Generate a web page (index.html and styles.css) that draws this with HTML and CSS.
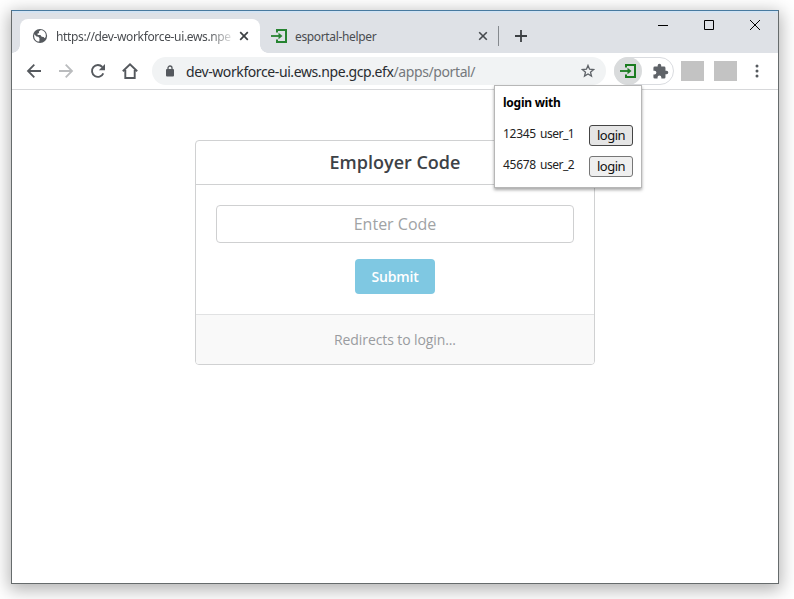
FILE: index.html
```html
<!DOCTYPE html>
<html lang="en">
<head>
<meta charset="utf-8">
<title>Employer Code</title>
<link rel="stylesheet" href="styles.css">
</head>
<body>
<div class="window">
  <div class="tabstrip">
    <div class="tab tab-active">
      <svg class="globe" viewBox="0 0 16 16"><circle cx="8" cy="8" r="7.1" fill="#55595e"/><path d="M2.2 6.2L4.5 8.5l1.800.2 1.200 1.500-.2 3.400C4 13.500 1.800 11 2.200 6.200zM8.800 2.100l-2 1.500.3 1.300-1.800.8.5 1.200 2.600.1 1.300 1.800 2 .1.8 1.400 1.200-1.300c.7-3.600-1.300-6.500-4.900-6.900z" fill="#fff"/></svg>
      <span class="tab-title tab-fade">https://dev-workforce-ui.ews.npe</span>
      <svg class="x" viewBox="0 0 10 10"><path d="M1.200 1.200l7.600 7.600M8.800 1.200L1.200 8.800" stroke="#3c4043" stroke-width="1.700"/></svg>
    </div>
    <div class="tab tab-second">
      <svg class="login-icon" viewBox="0 0 16 16"><path d="M6 4.500V2h9v12H6v-2.500" fill="none" stroke="#278432" stroke-width="2"/><path d="M0 8h9" stroke="#278432" stroke-width="1.800"/><path d="M7.500 4.700L11.500 8l-4 3.300z" fill="#278432"/></svg>
      <span class="tab-title second-title">esportal-helper</span>
      <svg class="x" viewBox="0 0 10 10"><path d="M1.200 1.200l7.600 7.600M8.800 1.200L1.200 8.800" stroke="#45494d" stroke-width="1.600"/></svg>
    </div>
    <i class="tab-sep"></i>
    <svg class="plus" viewBox="0 0 12 12"><path d="M6 0v12M0 6h12" stroke="#3c4043" stroke-width="1.800"/></svg>
    <div class="controls">
      <svg viewBox="0 0 10 10"><path d="M0 5.500h10" stroke="#000"/></svg>
      <svg viewBox="0 0 10 10"><path d="M.5.5h9v9h-9z" fill="none" stroke="#000"/></svg>
      <svg viewBox="0 0 10 10"><path d="M0 0l10 10M10 0L0 10" stroke="#000"/></svg>
    </div>
  </div>
  <div class="toolbar">
    <svg class="nav" viewBox="0 0 16 16"><path d="M15 8H2.200M8.300 1.700L2 8l6.300 6.300" fill="none" stroke="#55595e" stroke-width="1.800"/></svg>
    <svg class="nav" viewBox="0 0 16 16"><path d="M1 8h12.800M7.700 1.700L14 8l-6.300 6.300" fill="none" stroke="#babcbe" stroke-width="1.800"/></svg>
    <svg class="nav" viewBox="0 0 16 16"><path d="M13.300 10.300A5.900 5.900 0 1 1 12.300 4" fill="none" stroke="#55595e" stroke-width="1.900"/><path d="M15 1v6.200H8.800z" fill="#55595e"/></svg>
    <svg class="nav" viewBox="0 0 16 16"><path d="M.8 8.300L8 1.400l7.200 6.900M3.300 7v8h9.400V7" fill="none" stroke="#55595e" stroke-width="1.900"/></svg>
    <div class="omnibox">
      <svg class="lock" viewBox="0 0 8 12"><path d="M2 5V3a2 2 0 0 1 4 0v2" fill="none" stroke="#55595e" stroke-width="1.300"/><rect y="4" width="8" height="7.500" rx="1" fill="#55595e"/></svg>
      <span class="url">dev-workforce-ui.ews.npe.gcp.efx<span class="path">/apps/portal/</span></span>
      <svg class="star" viewBox="0 0 14 14"><path d="M7 1.400l1.550 3.800 4.100.3-3.150 2.650 1 4L7 10l-3.500 2.150 1-4L1.350 5.500l4.100-.3z" fill="none" stroke="#5f6368" stroke-width="1.300"/></svg>
    </div>
    <div class="extensions">
      <span class="ext-on"><svg class="login-icon" viewBox="0 0 16 16"><path d="M6 4.500V2h9v12H6v-2.500" fill="none" stroke="#1b7c20" stroke-width="2"/><path d="M0 8h9" stroke="#1b7c20" stroke-width="1.800"/><path d="M7.500 4.700L11.500 8l-4 3.300z" fill="#1b7c20"/></svg></span>
      <svg class="puzzle" viewBox="0 0 24 24"><path d="M20.500 11H19V7a2 2 0 0 0-2-2h-4V3.500a2.500 2.500 0 0 0-5 0V5H4a2 2 0 0 0-2 2v3.800h1.500a2.700 2.700 0 0 1 0 5.400H2V20a2 2 0 0 0 2 2h3.800v-1.500a2.700 2.700 0 0 1 5.400 0V22H17a2 2 0 0 0 2-2v-4h1.500a2.500 2.500 0 0 0 0-5z" fill="#5f6368"/></svg>
    </div>
    <i class="block"></i><i class="block"></i>
    <svg class="dots" viewBox="0 0 4 14"><g fill="#55595e"><circle cx="2" cy="2" r="1.500"/><circle cx="2" cy="7" r="1.500"/><circle cx="2" cy="12" r="1.500"/></g></svg>
  </div>
  <main class="page">
    <section class="card">
      <h1>Employer Code</h1>
      <div class="form">
        <input class="code" type="text" placeholder="Enter Code">
        <button class="submit">Submit</button>
      </div>
      <footer>Redirects to login...</footer>
    </section>
  </main>
  <aside class="popup">
    <h2>login with</h2>
    <div class="row"><span class="id">12345</span><span class="user">user_1</span><button class="login focused">login</button></div>
    <div class="row"><span class="id">45678</span><span class="user">user_2</span><button class="login">login</button></div>
  </aside>
</div>
</body>
</html>
```
FILE: styles.css
```css
* { box-sizing: border-box; }
body { margin: 0; padding: 10px 0 0 11px; background: #fff; height: 599px; overflow: hidden; font-family: "Noto Sans", "Open Sans", sans-serif; }
svg { display: block; flex: none; }
i { flex: none; }
.window { position: relative; width: 768px; height: 574px; border: 1px solid #666b6c; border-top-color: #487a9f; background: #fff; box-shadow: 0 4px 16px 2px rgba(0,0,0,.3); }
.tabstrip { height: 42px; background: #dee1e6; box-shadow: inset 0 2px #d4e3f2; display: flex; padding: 8px 0 0 8px; }
.tab { display: flex; align-items: center; height: 34px; flex: none; }
.tab-active { position: relative; width: 240px; background: #fff; border-radius: 8px 8px 0 0; padding-left: 12px; }
.tab-active::before, .tab-active::after { content: ""; position: absolute; bottom: 0; width: 8px; height: 8px; }
.tab-active::before { left: -8px; background: radial-gradient(circle at 0 0, transparent 7.5px, #fff 8px); }
.tab-active::after { right: -8px; background: radial-gradient(circle at 100% 0, transparent 7.5px, #fff 8px); }
.globe { width: 16px; height: 16px; margin-right: 8px; }
.tab-title { font-size: 12px; color: #4a4d51; white-space: nowrap; letter-spacing: -.35px; }
.tab-fade { width: 175px; margin-right: 8px; -webkit-mask-image: linear-gradient(90deg, #000 152px, transparent 180px); mask-image: linear-gradient(90deg, #000 152px, transparent 180px); }
.x { width: 10px; height: 10px; }
.tab-second { width: 238px; padding-left: 11px; }
.login-icon { width: 16px; height: 16px; }
.second-title { width: 175px; margin: 0 8px; }
.tab-second .x { margin-left: auto; margin-right: 10px; }
.tab-sep { width: 1px; height: 20px; background: #85898e; margin-top: 7px; }
.plus { width: 12px; height: 12px; margin: 11px 0 0 16px; }
.controls { display: flex; gap: 36px; margin: 1px 18px 0 auto; }
.controls svg { width: 10px; height: 10px; }
.toolbar { height: 37px; border-bottom: 1px solid #d7d8da; display: flex; align-items: center; padding-left: 14px; }
.nav { width: 16px; height: 16px; margin-right: 16px; }
.omnibox { width: 454px; height: 28px; border-radius: 14px; background: #f1f3f4; margin-left: -2px; display: flex; align-items: center; padding: 0 11px 0 14px; }
.lock { width: 8px; height: 12px; margin-right: 12px; }
.url { font-size: 14px; color: #292c30; white-space: nowrap; letter-spacing: -.4px; }
.path { color: #75797d; }
.star { width: 14px; height: 14px; margin-left: auto; }
.extensions { width: 60px; height: 28px; border: 1px solid #dadce0; border-radius: 14px; margin: 0 7px 0 8px; display: flex; align-items: center; }
.ext-on { width: 28px; height: 28px; border-radius: 50%; background: #d9dbdc; display: flex; align-items: center; justify-content: center; margin-left: -1px; }
.puzzle { width: 17px; height: 17px; margin-left: 9.5px; }
.block { width: 23px; height: 20px; background: #c3c3c3; margin-right: 10px; }
.dots { width: 4px; height: 14px; margin-left: 7.5px; }
.page { padding-top: 50px; }
.card { width: 400px; height: 225px; margin-left: 183px; border: 1px solid #d0d1d2; border-radius: 4px; overflow: hidden; font-family: "Open Sans", sans-serif; }
.card h1 { margin: 0; height: 44px; border-bottom: 1px solid #d0d1d2; text-align: center; font-size: 18px; line-height: 43px; font-weight: 600; color: #3d4247; }
.form { height: 129px; padding: 20px 20px 0; display: flex; flex-direction: column; align-items: center; }
.code { width: 358px; height: 38px; border: 1px solid #cfd0d1; border-radius: 4px; padding: 0; text-align: center; font: 400 16px "Open Sans", sans-serif; background: #fff; }
.code::placeholder { color: #a0a3a5; opacity: 1; }
.submit { width: 80px; height: 35px; margin-top: 16px; border: 0; border-radius: 4px; background: #7fc8e2; color: #fff; padding: 0; font: 600 14px "Open Sans", sans-serif; letter-spacing: -.15px; }
.card footer { height: 50px; border-top: 1px solid #e1e2e3; background: #f9f9f9; text-align: center; font-size: 14px; line-height: 49px; font-weight: 400; letter-spacing: -.1px; color: #999ca0; }
.popup { position: absolute; left: 482px; top: 74px; width: 148px; height: 103px; background: #fff; border: 1px solid #b7b7b7; box-shadow: 0 2px 3px rgba(0,0,0,.35); padding: 8px; color: #222; }
.popup h2 { margin: 0 0 13px; font-size: 12px; line-height: 18px; color: #000; letter-spacing: -.25px; }
.row { display: flex; height: 21px; margin-bottom: 10px; font-size: 12px; line-height: 18px; letter-spacing: -.5px; }
.id { width: 37px; letter-spacing: -.3px; }
.user { width: 49px; }
.login { width: 44px; height: 21px; border: 1px solid #767676; border-radius: 3px; background: #efefef; padding: 0; font: 13px/17px "Noto Sans", sans-serif; color: #111; letter-spacing: -.5px; }
.focused { border-color: #444; background: #e5e5e5; }
```
